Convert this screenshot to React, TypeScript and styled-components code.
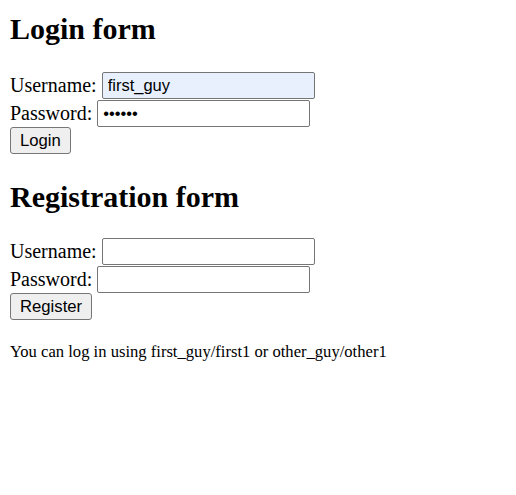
import React from "react";
import styled, { createGlobalStyle } from "styled-components";

const Global = createGlobalStyle`
  html, body { margin: 0; padding: 0; background: #fff; }
  body { font-family: "Liberation Serif", "Times New Roman", serif; color: #000; }
`;

const Page = styled.div`
  padding: 12px 10px 0 10px;
  font-size: 20px;
`;

const Heading = styled.h2<{ $first?: boolean }>`
  font-size: 30px;
  font-weight: bold;
  line-height: 33px;
  margin: ${(p) => (p.$first ? "0 0 27px 0" : "26px 0 25px 0")};
`;

const Row = styled.div<{ $h: number }>`
  display: flex;
  align-items: center;
  height: ${(p) => p.$h}px;
  line-height: 23px;
`;

const Label = styled.label`
  margin-right: 5px;
  white-space: nowrap;
`;

const Input = styled.input<{ $filled?: boolean }>`
  box-sizing: border-box;
  width: 213px;
  height: 27px;
  margin: 0;
  padding: 1px 5px;
  font-family: "Liberation Sans", Arial, sans-serif;
  font-size: 16.5px;
  color: #000;
  background: ${(p) => (p.$filled ? "#e8f0fe" : "#fff")};
  border: 1.5px solid #767676;
  border-radius: 2px;
  outline: none;
`;

const Button = styled.button`
  box-sizing: border-box;
  height: 27px;
  margin: 0;
  padding: 0 9px;
  font-family: "Liberation Sans", Arial, sans-serif;
  font-size: 16.7px;
  color: #000;
  background: #efefef;
  border: 1.5px solid #767676;
  border-radius: 3px;
`;

const Note = styled.p`
  margin: 23px 0 0 0;
  font-size: 16.6px;
  line-height: 18px;
`;

export default function App() {
  return (
    <Page>
      <Global />
      <Heading $first>Login form</Heading>
      <form onSubmit={(e) => e.preventDefault()}>
        <Row $h={27}>
          <Label>Username:</Label>
          <Input $filled defaultValue="first_guy" />
        </Row>
        <Row $h={28}>
          <Label>Password:</Label>
          <Input type="password" defaultValue="first1" />
        </Row>
        <Row $h={27}>
          <Button type="submit">Login</Button>
        </Row>
      </form>
      <Heading>Registration form</Heading>
      <form onSubmit={(e) => e.preventDefault()}>
        <Row $h={27}>
          <Label>Username:</Label>
          <Input />
        </Row>
        <Row $h={28}>
          <Label>Password:</Label>
          <Input type="password" />
        </Row>
        <Row $h={27}>
          <Button type="submit">Register</Button>
        </Row>
      </form>
      <Note>You can log in using first_guy/first1 or other_guy/other1</Note>
    </Page>
  );
}
